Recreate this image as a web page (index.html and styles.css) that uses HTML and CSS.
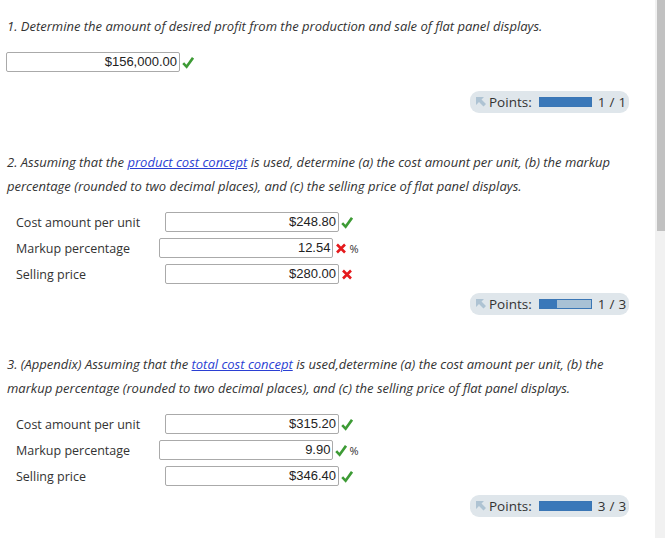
FILE: index.html
```html
<!DOCTYPE html>
<html>
<head>
<meta charset="utf-8">
<link rel="stylesheet" href="styles.css">
</head>
<body>
<div class="page">
  <main class="content">
    <section class="q q1">
      <p class="prompt">1. Determine the amount of desired profit from the production and sale of flat panel displays.</p>
      <div class="single">
        <span class="field">$156,000.00</span>
        <svg class="mark" viewBox="0 0 12 13" width="12" height="13"><path d="M1.2 7.2 L4.6 10.8 L11 1.8" fill="none" stroke="#3d9b35" stroke-width="2.6"/></svg>
      </div>
      <div class="points-row first">
        <div class="points">
          <svg class="pin" viewBox="0 0 10 10" width="10" height="10"><polygon points="0,0 8,0 5.5,2.5 10,7 7.5,9.5 3,5 0,8" fill="#aec3d3"/></svg>
          <span class="plabel">Points:</span>
          <span class="bar"><span class="fill" style="width:100%"></span></span>
          <span class="score">1 / 1</span>
        </div>
      </div>
    </section>

    <section class="q q2">
      <p class="prompt">2. Assuming that the <a href="#">product cost concept</a> is used, determine (a) the cost amount per unit, (b) the markup percentage (rounded to two decimal places), and (c) the selling price of flat panel displays.</p>
      <div class="rows">
        <div class="row">
          <span class="label">Cost amount per unit</span>
          <span class="cell"><span class="field">$248.80</span><svg class="mark" viewBox="0 0 12 13" width="12" height="13"><path d="M1.2 7.2 L4.6 10.8 L11 1.8" fill="none" stroke="#3d9b35" stroke-width="2.6"/></svg></span>
        </div>
        <div class="row">
          <span class="label">Markup percentage</span>
          <span class="cell"><span class="field">12.54</span><svg class="mark" viewBox="0 0 12 13" width="12" height="13"><path d="M2 2.5 L10 10.5 M10 2.5 L2 10.5" fill="none" stroke="#e5191c" stroke-width="2.6"/></svg><span class="unit">%</span></span>
        </div>
        <div class="row">
          <span class="label">Selling price</span>
          <span class="cell"><span class="field">$280.00</span><svg class="mark" viewBox="0 0 12 13" width="12" height="13"><path d="M2 2.5 L10 10.5 M10 2.5 L2 10.5" fill="none" stroke="#e5191c" stroke-width="2.6"/></svg></span>
        </div>
      </div>
      <div class="points-row">
        <div class="points">
          <svg class="pin" viewBox="0 0 10 10" width="10" height="10"><polygon points="0,0 8,0 5.5,2.5 10,7 7.5,9.5 3,5 0,8" fill="#aec3d3"/></svg>
          <span class="plabel">Points:</span>
          <span class="bar"><span class="fill" style="width:33.3%"></span></span>
          <span class="score">1 / 3</span>
        </div>
      </div>
    </section>

    <section class="q q3">
      <p class="prompt">3. (Appendix) Assuming that the <a href="#">total cost concept</a> is used,determine (a) the cost amount per unit, (b) the markup percentage (rounded to two decimal places), and (c) the selling price of flat panel displays.</p>
      <div class="rows">
        <div class="row">
          <span class="label">Cost amount per unit</span>
          <span class="cell"><span class="field">$315.20</span><svg class="mark" viewBox="0 0 12 13" width="12" height="13"><path d="M1.2 7.2 L4.6 10.8 L11 1.8" fill="none" stroke="#3d9b35" stroke-width="2.6"/></svg></span>
        </div>
        <div class="row">
          <span class="label">Markup percentage</span>
          <span class="cell"><span class="field">9.90</span><svg class="mark" viewBox="0 0 12 13" width="12" height="13"><path d="M1.2 7.2 L4.6 10.8 L11 1.8" fill="none" stroke="#3d9b35" stroke-width="2.6"/></svg><span class="unit">%</span></span>
        </div>
        <div class="row">
          <span class="label">Selling price</span>
          <span class="cell"><span class="field">$346.40</span><svg class="mark" viewBox="0 0 12 13" width="12" height="13"><path d="M1.2 7.2 L4.6 10.8 L11 1.8" fill="none" stroke="#3d9b35" stroke-width="2.6"/></svg></span>
        </div>
      </div>
      <div class="points-row">
        <div class="points">
          <svg class="pin" viewBox="0 0 10 10" width="10" height="10"><polygon points="0,0 8,0 5.5,2.5 10,7 7.5,9.5 3,5 0,8" fill="#aec3d3"/></svg>
          <span class="plabel">Points:</span>
          <span class="bar"><span class="fill" style="width:100%"></span></span>
          <span class="score">3 / 3</span>
        </div>
      </div>
    </section>
  </main>
  <div class="scrollbar"><div class="thumb"></div></div>
</div>
</body>
</html>
```

FILE: styles.css
```css
* { box-sizing: border-box; }
html, body { margin: 0; padding: 0; background: #fff; }
body {
  font-family: "Open Sans", "Noto Sans", sans-serif;
  color: #333;
  overflow: hidden;
}
.page {
  display: flex;
  width: 665px;
  height: 538px;
}
.content {
  flex: 1;
  padding: 14px 0 0 7px;
}
.scrollbar {
  width: 10px;
  background: #f1f1f1;
  padding-left: 2px;
}
.thumb {
  height: 231px;
  background: #c1c1c1;
}
.prompt {
  margin: 0;
  font-style: italic;
  font-size: 13px;
  line-height: 24px;
  color: #333;
  padding-right: 20px;
}
.prompt a { color: #2b3fd3; text-decoration: underline; }
.single {
  display: flex;
  align-items: center;
  margin-top: 14px;
  margin-left: -1px;
}
.field {
  display: inline-block;
  width: 174px;
  height: 20px;
  border: 1px solid #aaa;
  border-radius: 2px;
  font-family: "Liberation Sans", Arial, sans-serif;
  font-size: 13px;
  line-height: 18px;
  text-align: right;
  padding-right: 2px;
  color: #222;
}
.mark {
  display: block;
  margin-left: 2px;
  flex: none;
}
.unit {
  font-family: "Open Sans", sans-serif;
  font-size: 11px;
  color: #333;
  margin-left: 2px;
}
.points-row {
  display: flex;
  justify-content: flex-end;
  margin-top: 9px;
  padding-right: 26px;
}
.points-row.first { margin-top: 19px; }
.points {
  display: flex;
  align-items: center;
  height: 22px;
  width: 159px;
  padding: 0 6px;
  border-radius: 9px;
  background: #dfe6eb;
  font-size: 13.5px;
  color: #333;
}
.pin { margin-right: 3px; flex: none; }
.plabel { margin-right: 7px; }
.bar {
  display: inline-block;
  width: 53px;
  height: 10px;
  background: #a8c1d5;
  border: 1px solid #3a76b5;
  margin-right: 6px;
  flex: none;
}
.fill {
  display: block;
  height: 100%;
  background: #3a78b9;
}
.score { letter-spacing: 0.3px; white-space: nowrap; }
.q2 { margin-top: 37px; }
.q3 { margin-top: 37px; }
.rows {
  margin-top: 14px;
  display: flex;
  flex-direction: column;
  gap: 6px;
}
.row {
  display: grid;
  grid-template-columns: 141px 204px;
  align-items: center;
  padding-left: 9px;
}
.label {
  font-size: 12.5px;
  color: #333;
}
.cell {
  display: flex;
  justify-content: center;
  align-items: center;
}
```
